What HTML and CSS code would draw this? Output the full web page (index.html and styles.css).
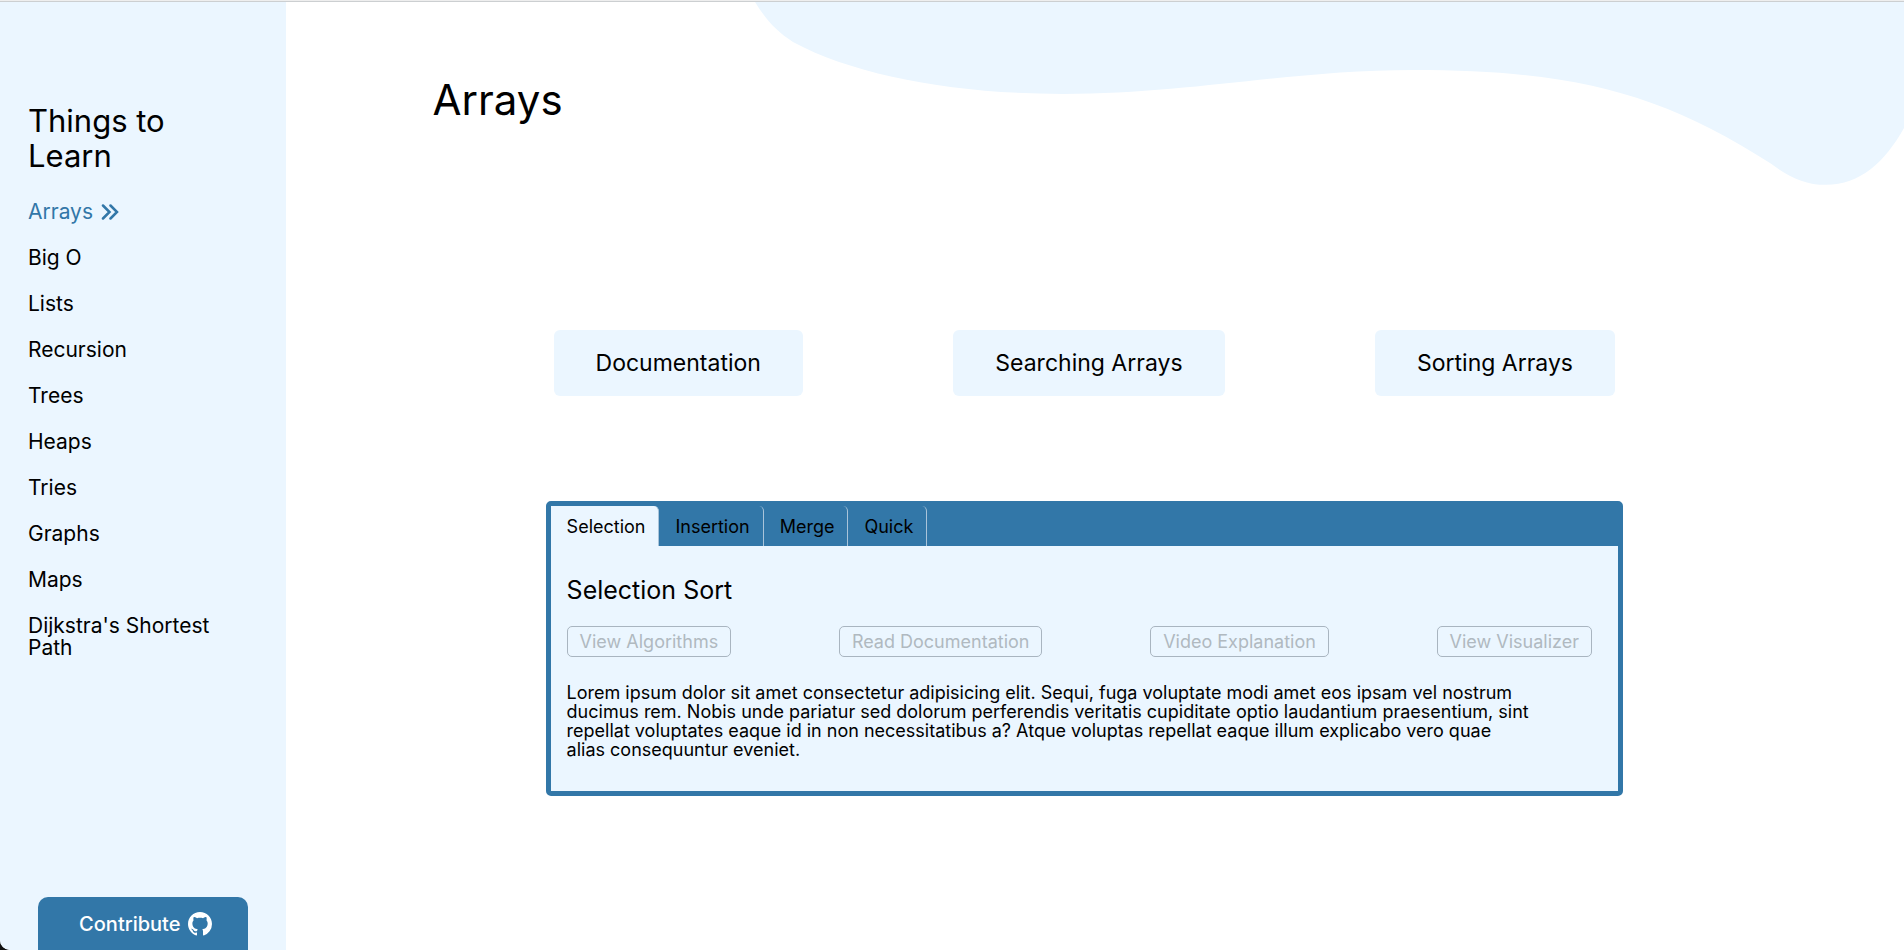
FILE: index.html
```html
<!DOCTYPE html>
<html lang="en">
<head>
<meta charset="utf-8">
<meta name="viewport" content="width=device-width, initial-scale=1">
<title>Arrays</title>
<link rel="stylesheet" href="styles.css">
</head>
<body>
<div class="page">
  <aside class="sidebar">
    <h2 class="sidebar-title">Things to Learn</h2>
    <nav>
      <ul class="topics">
        <li><a class="topic active" href="#arrays">Arrays
          <svg class="chevrons" viewBox="0 0 18 16" aria-hidden="true"><path d="M2 1.5 8.5 8 2 14.500M9.500 1.500 16 8 9.500 14.500"/></svg></a></li>
        <li><a class="topic" href="#big-o">Big O</a></li>
        <li><a class="topic" href="#lists">Lists</a></li>
        <li><a class="topic" href="#recursion">Recursion</a></li>
        <li><a class="topic" href="#trees">Trees</a></li>
        <li><a class="topic" href="#heaps">Heaps</a></li>
        <li><a class="topic" href="#tries">Tries</a></li>
        <li><a class="topic" href="#graphs">Graphs</a></li>
        <li><a class="topic" href="#maps">Maps</a></li>
        <li><a class="topic" href="#dijkstra">Dijkstra's Shortest Path</a></li>
      </ul>
    </nav>
    <a class="contribute" href="#contribute">Contribute
      <svg class="github" viewBox="0 0 16 16" aria-hidden="true"><path d="M8 0C3.58 0 0 3.58 0 8c0 3.54 2.29 6.53 5.47 7.59.4.07.55-.17.55-.38 0-.19-.01-.82-.01-1.490-2.010.37-2.530-.49-2.690-.94-.09-.23-.48-.94-.82-1.130-.28-.15-.68-.52-.01-.53.63-.01 1.080.58 1.230.82.72 1.210 1.870.87 2.330.66.07-.52.28-.87.51-1.070-1.780-.2-3.640-.89-3.640-3.950 0-.87.31-1.590.82-2.150-.08-.2-.36-1.020.08-2.120 0 0 .67-.21 2.200.82.64-.18 1.320-.27 2-.27s1.360.09 2 .27c1.530-1.040 2.200-.82 2.200-.82.44 1.100.16 1.920.08 2.120.51.56.82 1.270.82 2.150 0 3.070-1.870 3.750-3.650 3.950.29.25.54.73.54 1.480 0 1.070-.01 1.930-.01 2.200 0 .21.15.46.55.38A8.010 8.010 0 0 0 16 8c0-4.420-3.580-8-8-8z"/></svg></a>
  </aside>
  <main class="main">
    <svg class="wave" viewBox="0 0 1150 184" aria-hidden="true"><path d="M0 0C11 18 22 30 38 40C101 74 201 92 308 92C436 92 536 68 659 68C816 68 906 90 1017 162C1036 176 1051 183 1072 183C1106 183 1131 160 1150 126V0Z"/></svg>
    <h1 class="page-title">Arrays</h1>
    <div class="content">
      <div class="sections">
        <button class="section-button" type="button">Documentation</button>
        <button class="section-button" type="button">Searching Arrays</button>
        <button class="section-button" type="button">Sorting Arrays</button>
      </div>
      <section class="panel">
        <div class="tabs" role="tablist">
          <button class="tab selected" type="button" role="tab" aria-selected="true">Selection</button>
          <button class="tab" type="button" role="tab" aria-selected="false">Insertion</button>
          <button class="tab" type="button" role="tab" aria-selected="false">Merge</button>
          <button class="tab" type="button" role="tab" aria-selected="false">Quick</button>
        </div>
        <div class="panel-body" role="tabpanel">
          <h3 class="panel-title">Selection Sort</h3>
          <div class="actions">
            <button class="action" type="button" disabled>View Algorithms</button>
            <button class="action" type="button" disabled>Read Documentation</button>
            <button class="action" type="button" disabled>Video Explanation</button>
            <button class="action" type="button" disabled>View Visualizer</button>
          </div>
          <p class="description">Lorem ipsum dolor sit amet consectetur adipisicing elit. Sequi, fuga voluptate modi amet eos ipsam vel nostrum<br>
            ducimus rem. Nobis unde pariatur sed dolorum perferendis veritatis cupiditate optio laudantium praesentium, sint<br>
            repellat voluptates eaque id in non necessitatibus a? Atque voluptas repellat eaque illum explicabo vero quae<br>
            alias consequuntur eveniet.</p>
        </div>
      </section>
    </div>
  </main>
</div>
</body>
</html>
```
FILE: styles.css
```css
:root {
  --light: #ebf6ff;
  --blue: #3277a8;
}

* {
  box-sizing: border-box;
  margin: 0;
  padding: 0;
}

html {
  background: #111;
}

body {
  display: flex;
  flex-direction: column;
  min-height: 100vh;
  border-top: 1px solid #eeeeee;
  font-family: Inter, "Open Sans", sans-serif;
  color: #000;
}

button {
  font: inherit;
  color: inherit;
  border: 0;
}

.page {
  display: flex;
  flex: 1;
  background: #fff;
  border-top: 1px solid #cccfd1;
  border-bottom-left-radius: 10px;
  overflow: hidden;
}

.sidebar {
  display: flex;
  flex-direction: column;
  width: 15%;
  padding: 101px 38px 0 28px;
  background: var(--light);
}

.sidebar-title {
  max-width: 180px;
  margin-bottom: 28px;
  font-size: 31px;
  font-weight: 400;
  line-height: 35px;
}

.topics {
  display: grid;
  gap: 24px;
  list-style: none;
}

.topic {
  display: block;
  font-size: 21px;
  line-height: 22px;
  color: inherit;
  text-decoration: none;
}

.topic.active {
  display: flex;
  align-items: center;
  gap: 8px;
  color: var(--blue);
}

.chevrons {
  width: 18px;
  height: 16px;
  fill: none;
  stroke: currentColor;
  stroke-width: 2.5;
  stroke-linecap: round;
}

.contribute {
  display: flex;
  align-items: center;
  justify-content: center;
  gap: 8px;
  height: 53px;
  margin-top: auto;
  margin-left: 10px;
  padding-left: 6px;
  border-radius: 10px 10px 0 0;
  background: var(--blue);
  color: #fff;
  font-size: 20px;
  font-weight: 500;
  text-decoration: none;
}

.github {
  width: 24px;
  height: 24px;
  fill: currentColor;
}

.main {
  position: relative;
  flex: 1;
}

.wave {
  position: absolute;
  top: 0;
  right: 0;
  width: 71%;
  fill: var(--light);
}

.page-title {
  position: relative;
  padding: 74px 0 0 147px;
  font-size: 42px;
  font-weight: 400;
  line-height: 48px;
}

.content {
  margin: 206px 281px 0 260px;
}

.sections {
  display: flex;
  justify-content: space-between;
  padding: 0 8px;
}

.section-button {
  height: 66px;
  padding: 0 42px;
  border-radius: 6px;
  background: var(--light);
  font-size: 23px;
}

.panel {
  margin-top: 105px;
  border: 5px solid var(--blue);
  border-radius: 5px;
  background: var(--light);
}

.tabs {
  display: flex;
  background: var(--blue);
}

.tab {
  height: 40px;
  padding: 0 13px 0 16px;
  border-right: 1px solid #a9c4da;
  border-top-right-radius: 5px;
  background: var(--blue);
  font-size: 18px;
}

.tab.selected {
  background: var(--light);
}

.panel-body {
  padding: 30px 26px 32px 16px;
}

.panel-title {
  margin-bottom: 22px;
  font-size: 25px;
  font-weight: 400;
  line-height: 28px;
}

.actions {
  display: flex;
  justify-content: space-between;
  margin-bottom: 26px;
}

.action {
  height: 31px;
  padding: 0 12px;
  border: 1px solid #a9b5c0;
  border-radius: 5px;
  background: transparent;
  color: #b0b9c0;
  font-size: 18px;
}

.description {
  font-size: 18px;
  line-height: 19px;
}
```
